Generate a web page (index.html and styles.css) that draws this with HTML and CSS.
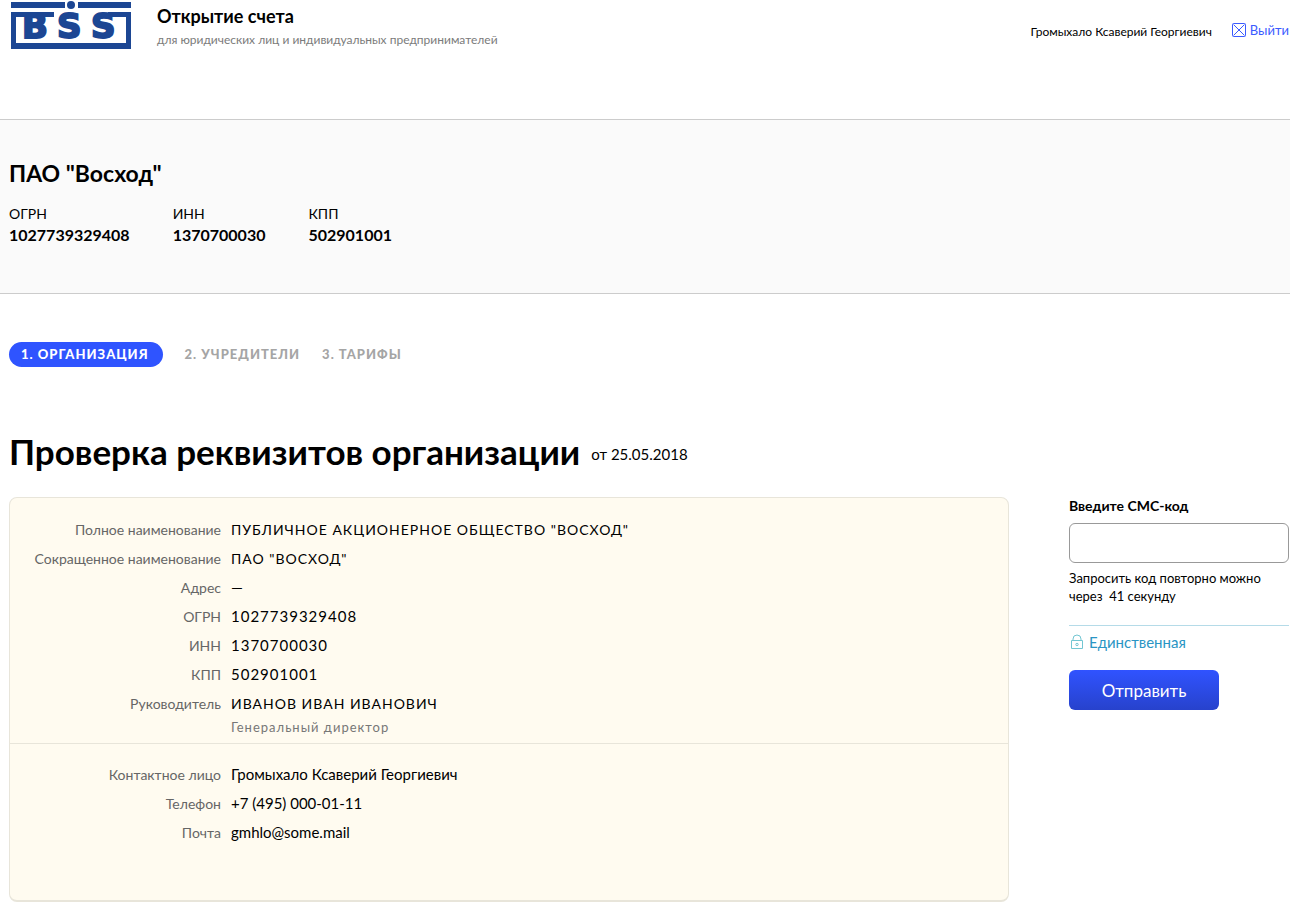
FILE: index.html
```html
<!DOCTYPE html>
<html lang="ru">
<head>
<meta charset="utf-8">
<meta name="viewport" content="width=device-width, initial-scale=1">
<title>Открытие счета</title>
<link rel="stylesheet" href="styles.css">
</head>
<body>
<header class="header">
  <svg class="logo" width="122" height="50" viewBox="0 0 122 50" role="img" aria-label="BSS">
    <g fill="#1c4693">
      <path d="M1 2H55V8H1ZM68 2H121V8H68Z"/>
      <circle cx="61" cy="5" r="4"/>
      <path d="M1 12H44V17H6V43H116V17H98V12H121V49H1Z"/>
      <g class="logo-letters">
        <text x="12" y="38">B</text>
        <text x="47" y="38">S</text>
        <text x="81" y="38">S</text>
      </g>
    </g>
  </svg>
  <div class="brand">
    <div class="brand-title">Открытие счета</div>
    <div class="brand-sub">для юридических лиц и индивидуальных предпринимателей</div>
  </div>
  <div class="user">
    <span class="user-name">Громыхало Ксаверий Георгиевич</span>
    <a class="logout" href="#">
      <svg width="15" height="15" viewBox="0 0 15 15" fill="none" stroke="currentColor" aria-hidden="true"><rect x="0.5" y="0.5" width="13" height="13" rx="1"/><path d="M1.500 1.500l11 11M12.500 1.500l-11 11"/></svg>
      <span>Выйти</span>
    </a>
  </div>
</header>

<section class="company">
  <h2 class="company-name">ПАО "Восход"</h2>
  <dl class="codes">
    <div><dt>ОГРН</dt><dd>1027739329408</dd></div>
    <div><dt>ИНН</dt><dd>1370700030</dd></div>
    <div><dt>КПП</dt><dd>502901001</dd></div>
  </dl>
</section>

<main class="main">
  <nav class="steps">
    <a class="step step-active" href="#">1. ОРГАНИЗАЦИЯ</a>
    <a class="step" href="#">2. УЧРЕДИТЕЛИ</a>
    <a class="step" href="#">3. ТАРИФЫ</a>
  </nav>
  <div class="heading">
    <h1>Проверка реквизитов организации</h1>
    <span>от 25.05.2018</span>
  </div>
  <div class="columns">
    <div class="card">
      <dl class="rows rows-org">
        <dt>Полное наименование</dt><dd class="caps">ПУБЛИЧНОЕ АКЦИОНЕРНОЕ ОБЩЕСТВО "ВОСХОД"</dd>
        <dt>Сокращенное наименование</dt><dd class="caps">ПАО "ВОСХОД"</dd>
        <dt>Адрес</dt><dd>—</dd>
        <dt>ОГРН</dt><dd class="digits">1027739329408</dd>
        <dt>ИНН</dt><dd class="digits">1370700030</dd>
        <dt>КПП</dt><dd class="digits">502901001</dd>
        <dt>Руководитель</dt><dd class="caps">ИВАНОВ ИВАН ИВАНОВИЧ</dd>
        <dd class="post">Генеральный директор</dd>
      </dl>
      <dl class="rows rows-contact">
        <dt>Контактное лицо</dt><dd>Громыхало Ксаверий Георгиевич</dd>
        <dt>Телефон</dt><dd>+7 (495) 000-01-11</dd>
        <dt>Почта</dt><dd>gmhlo@some.mail</dd>
      </dl>
    </div>
    <form class="confirm">
      <label for="sms">Введите СМС-код</label>
      <input id="sms" type="text">
      <p class="hint">Запросить код повторно можно<br>через&nbsp; 41 секунду</p>
      <div class="signer">
        <svg width="16" height="16" viewBox="0 0 16 16" fill="none" stroke="#72c6d2" aria-hidden="true"><path d="M2.500 6.500h11v8h-11zM4 6.500V5a4 4 0 0 1 8 0v1.500"/><circle cx="8" cy="10.500" r="1.200"/></svg>
        <span>Единственная</span>
      </div>
      <button type="button">Отправить</button>
    </form>
  </div>
</main>
</body>
</html>
```
FILE: styles.css
```css
* { box-sizing: border-box; }
body { margin: 0; background: #fff; color: #000; font: 15px/20px Lato, "Noto Sans", sans-serif; }
h1, h2, dl, dd, p { margin: 0; }
a { color: inherit; text-decoration: none; }

.header { display: flex; align-items: flex-start; padding: 0 1px 69px 10px; }
.logo { flex: none; margin-right: 25px; }
.logo-letters { font: bold 34px "DejaVu Sans", sans-serif; stroke: #1c4693; stroke-width: 2; }
.brand { flex: 1; padding-top: 6px; }
.brand-title { font-size: 18px; font-weight: 700; }
.brand-sub { padding-top: 4px; font-size: 12px; color: #7b7b7b; }
.user { display: flex; gap: 20px; padding-top: 20px; font-size: 12px; }
.user-name { padding-top: 2px; }
.logout { display: flex; align-items: center; align-self: flex-start; gap: 3px; color: #3b5bff; font-size: 13px; }

.company { padding: 39px 9px 48px; background: #fafafa; border-top: 1px solid #ccc; border-bottom: 1px solid #ccc; }
.company-name { font-size: 23px; line-height: 28px; }
.codes { display: flex; gap: 43px; padding-top: 16px; line-height: 21px; }
.codes dt { font-size: 14px; }
.codes dd { font-size: 16px; font-weight: 700; }

.main { padding: 48px 1px 0 9px; }
.steps { display: flex; gap: 22px; color: #a5a5a5; font-size: 13px; font-weight: 900; letter-spacing: 1px; line-height: 25px; }
.step-active { padding: 0 14px 0 12px; border-radius: 13px; background: #2f54ff; color: #fff; }
.heading { display: flex; align-items: center; gap: 11px; padding: 63px 0 24px; }
.heading h1 { font-size: 35px; line-height: 43px; }
.heading span { padding-top: 4px; }

.columns { display: flex; align-items: flex-start; gap: 60px; }
.card { flex: 1; border: 1px solid #e8e5da; border-bottom-width: 2px; border-radius: 8px; background: #fffbf0; }
.rows { display: grid; grid-template-columns: 211px 1fr; column-gap: 10px; line-height: 29px; }
.rows dt { color: #666; font-size: 14px; text-align: right; }
.caps { font-size: 14px; letter-spacing: 1px; }
.digits { letter-spacing: 1px; }
.post { grid-column: 2; color: #777; font-size: 13px; letter-spacing: 1px; line-height: 18px; }
.rows-org { padding: 17px 0 7px; border-bottom: 1px solid #e8e5da; }
.rows-contact { padding: 16px 0 53px; }

.confirm { flex: none; display: flex; flex-direction: column; width: 220px; }
.confirm label { padding-bottom: 8px; font-size: 14px; font-weight: 700; line-height: 18px; }
.confirm input { width: 100%; height: 40px; padding: 0 10px; border: 1px solid #999; border-radius: 6px; background: #fff; font: inherit; }
.hint { padding: 6px 0 20px; font-size: 13px; line-height: 18px; }
.signer { display: flex; align-items: center; gap: 4px; padding: 6px 0 18px; border-top: 1px solid #b5dbe8; color: #2a95c4; font-size: 15px; }
.confirm button { width: 150px; height: 40px; border: 0; border-radius: 6px; background: linear-gradient(#3053ff, #2742cc); color: #fff; font: 17px Lato, "Noto Sans", sans-serif; }
```
